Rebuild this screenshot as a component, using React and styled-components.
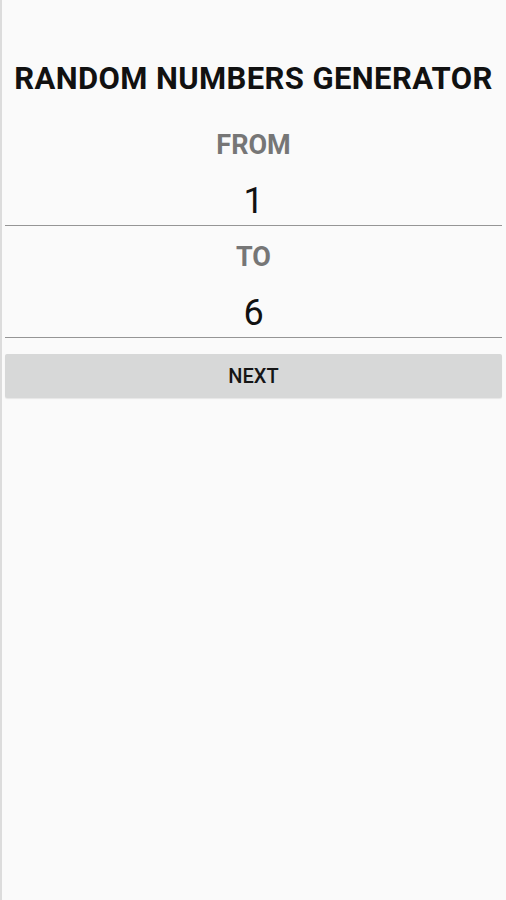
import React, { useState } from 'react';
import styled, { createGlobalStyle } from 'styled-components';

const GlobalStyle = createGlobalStyle`
  html, body {
    margin: 0;
    padding: 0;
    background: #fafafa;
  }
  body {
    font-family: Roboto, "Noto Sans", sans-serif;
  }
`;

const Screen = styled.div`
  min-height: 100vh;
  box-sizing: border-box;
  background: #fafafa;
  border-left: 2px solid #dcdcdc;
  padding: 61px 4px 0 3px;
  display: flex;
  flex-direction: column;
`;

const Title = styled.h1`
  margin: 0 0 32px;
  font-size: 31px;
  line-height: 36px;
  font-weight: 700;
  letter-spacing: 0.4px;
  color: #111;
  text-align: center;
  white-space: nowrap;
`;

const Field = styled.div`
  display: flex;
  flex-direction: column;
  align-items: stretch;
  margin-bottom: 15px;
`;

const Label = styled.div`
  font-size: 27px;
  line-height: 32px;
  font-weight: 700;
  color: #767676;
  text-align: center;
  margin-bottom: 18px;
`;

const ValueInput = styled.input`
  display: block;
  width: 100%;
  box-sizing: border-box;
  height: 47px;
  margin: 0;
  padding: 0 0 2px;
  border: none;
  border-bottom: 1px solid #959595;
  background: transparent;
  font-family: Roboto, sans-serif;
  font-size: 36px;
  line-height: 44px;
  color: #111;
  text-align: center;
  outline: none;
`;

const Button = styled.button`
  height: 44px;
  margin: 1px 0 0;
  border: none;
  border-radius: 2px;
  background: #d7d8d8;
  box-shadow: 0 1px 1px rgba(0, 0, 0, 0.08);
  font-family: Roboto, sans-serif;
  font-size: 20px;
  font-weight: 500;
  color: #151515;
  display: flex;
  align-items: center;
  justify-content: center;
  cursor: pointer;
`;

const App = () => {
  const [from, setFrom] = useState('1');
  const [to, setTo] = useState('6');

  return (
    <Screen>
      <GlobalStyle />
      <Title>RANDOM NUMBERS GENERATOR</Title>
      <Field>
        <Label>FROM</Label>
        <ValueInput value={from} onChange={(e) => setFrom(e.target.value)} />
      </Field>
      <Field>
        <Label>TO</Label>
        <ValueInput value={to} onChange={(e) => setTo(e.target.value)} />
      </Field>
      <Button>NEXT</Button>
    </Screen>
  );
};

export default App;
